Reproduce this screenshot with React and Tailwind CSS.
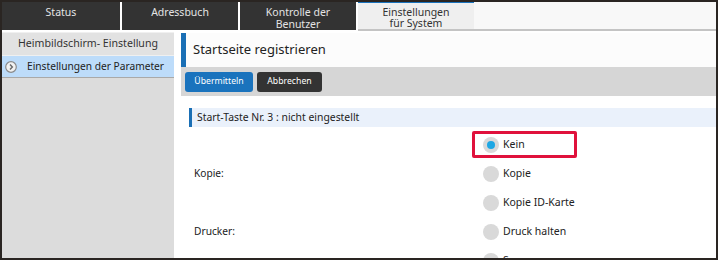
const tabs = [
  { label: ["Status"], active: false, w: "w-[118px]" },
  { label: ["Adressbuch"], active: false, w: "w-[116px]" },
  { label: ["Kontrolle der", "Benutzer"], active: false, w: "w-[116px]" },
  { label: ["Einstellungen", "für System"], active: true, w: "w-[116px]" },
];

const groups = [
  { label: "Kopie:", options: ["Kein", "Kopie", "Kopie ID-Karte"] },
  { label: "Drucker:", options: ["Druck halten"] },
  { label: "Scannen:", options: ["Scannen", "E-Mail"] },
];

function ChevronCircle() {
  return (
    <svg width="12" height="12" viewBox="0 0 12 12">
      <circle cx="6" cy="6" r="5.3" fill="#f2f2f2" stroke="#8a8a8a" strokeWidth="1.2" />
      <path d="M5 3.6 L7.3 6 L5 8.4" fill="none" stroke="#6b6b6b" strokeWidth="1.5" />
    </svg>
  );
}

function Radio({ checked }) {
  return (
    <span className="w-[16px] h-[16px] rounded-full bg-[#d9d9d9] flex items-center justify-center shrink-0">
      {checked && <span className="w-[8px] h-[8px] rounded-full bg-[#1ea7e4]" />}
    </span>
  );
}

export default function App() {
  return (
    <div
      className="w-[718px] h-[260px] border-2 border-[#2a2522] bg-white overflow-hidden flex flex-col text-[#222]"
      style={{ fontFamily: '"Noto Sans", "Open Sans", sans-serif' }}
    >
      {/* Tabs */}
      <div className="flex h-[29px] shrink-0 gap-[2px] bg-white">
        {tabs.map((t) =>
          t.active ? (
            <div
              key={t.label[0]}
              className={`${t.w} bg-[#efefef] border-t border-[#1a73bd] border-b-2 border-b-[#c4c4c4] flex flex-col items-center pt-[4px] text-[10.5px] leading-[11px] text-[#333]`}
            >
              {t.label.map((l) => (
                <span key={l}>{l}</span>
              ))}
            </div>
          ) : (
            <div
              key={t.label[0]}
              className={`${t.w} bg-[#333] h-[28px] flex flex-col items-center pt-[4px] text-[10.5px] leading-[12px] text-[#e4e4e4]`}
            >
              {t.label.map((l) => (
                <span key={l}>{l}</span>
              ))}
            </div>
          )
        )}
        <div className="flex-1 -ml-[2px] bg-[#f8f8f8] border-b-2 border-[#c4c4c4]" />
      </div>

      <div className="flex flex-1 min-h-0 pt-[1px]">
        {/* Sidebar */}
        <div className="w-[172px] shrink-0 bg-[#dcdcdc] flex flex-col">
          <div className="h-[24px] bg-[#e2e2e2] border-t border-[#f0f0f0] border-b border-[#c8c8c8] flex items-center justify-center text-[10.6px] text-[#333]">
            Heimbildschirm- Einstellung
          </div>
          <div className="h-[22px] bg-[#bddcfa] border-b border-[#a9a9a9] flex items-center gap-[10px] pl-[3px] text-[10.2px] text-[#222] whitespace-nowrap">
            <ChevronCircle />
            <span>Einstellungen der Parameter</span>
          </div>
        </div>

        {/* Main */}
        <div className="flex-1 ml-[7px] flex flex-col min-w-0">
          <div className="h-[34px] shrink-0 mt-[1px] bg-[#fcfcfc] border-l-[5px] border-[#1a6fb5] flex items-center pl-[7px] text-[13px] text-[#222]">
            Startseite registrieren
          </div>
          <div className="h-[29px] shrink-0 bg-[#d6d6d6] flex items-center gap-[4px] px-[4px]">
            <button className="h-[20px] w-[68px] rounded-[3px] bg-[#1a73bd] text-white text-[8.7px]">
              Übermitteln
            </button>
            <button className="h-[20px] w-[65px] rounded-[3px] bg-[#333] text-white text-[8.7px]">
              Abbrechen
            </button>
          </div>

          <div className="mt-[12px] ml-[8px] h-[19px] shrink-0 bg-[#eaf1fb] border-l-[3px] border-[#1a6fb5] flex items-center pl-[5px] text-[10.4px]">
            Start-Taste Nr. 3 : nicht eingestellt
          </div>

          <div className="mt-[3px] flex flex-col">
            {groups.map((g) => (
              <div key={g.label} className="flex">
                <div className="w-[302px] shrink-0 pl-[13px] flex items-center text-[10.2px]">
                  {g.label}
                </div>
                <div className="flex flex-col">
                  {g.options.map((o) => (
                    <div key={o} className="relative h-[29px] flex items-center gap-[4px] text-[10.5px]">
                      <Radio checked={o === "Kein"} />
                      <span>{o}</span>
                      {o === "Kein" && (
                        <span className="absolute left-[-11px] top-[1px] w-[105px] h-[27px] border-[3px] border-[#e0113c] rounded-[2px]" />
                      )}
                    </div>
                  ))}
                </div>
              </div>
            ))}
          </div>
        </div>
      </div>
    </div>
  );
}
